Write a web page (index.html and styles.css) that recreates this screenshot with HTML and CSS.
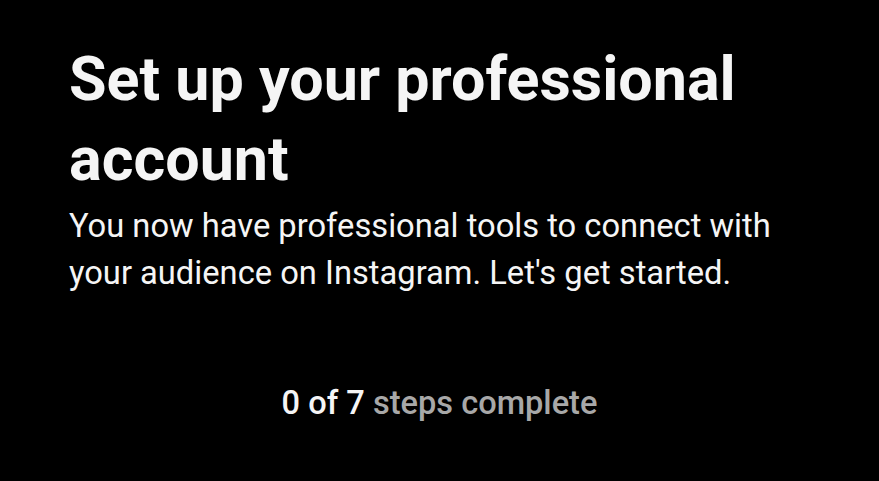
FILE: index.html
```html
<!DOCTYPE html>
<html>
<head>
<meta charset="utf-8">
<link rel="stylesheet" href="styles.css">
</head>
<body>
<main class="page">
  <h1 class="title">Set up your professional account</h1>
  <p class="subtitle">You now have professional tools to connect with your audience on Instagram. Let's get started.</p>
  <p class="progress"><span class="progress-count">0 of 7</span> <span class="progress-label">steps complete</span></p>
</main>
</body>
</html>
```
FILE: styles.css
```css
html, body {
  margin: 0;
  padding: 0;
  background: #000;
}
body {
  font-family: Roboto, "Noto Sans", sans-serif;
  color: #f5f5f5;
  width: 879px;
  height: 481px;
  overflow: hidden;
}
.page {
  padding: 39px 69px 0 69px;
  display: flex;
  flex-direction: column;
}
.title {
  margin: 0;
  font-size: 61px;
  line-height: 80px;
  font-weight: 700;
  width: 760px;
}
.subtitle {
  margin: 4px 0 0 0;
  font-size: 32.7px;
  line-height: 47px;
  font-weight: 400;
  width: 740px;
}
.progress {
  margin: 86px -69px 0 -69px;
  font-size: 32.6px;
  line-height: 40px;
  font-weight: 500;
  text-align: center;
}
.progress-count {
  color: #f5f5f5;
}
.progress-label {
  color: #a8a8a8;
}
```
